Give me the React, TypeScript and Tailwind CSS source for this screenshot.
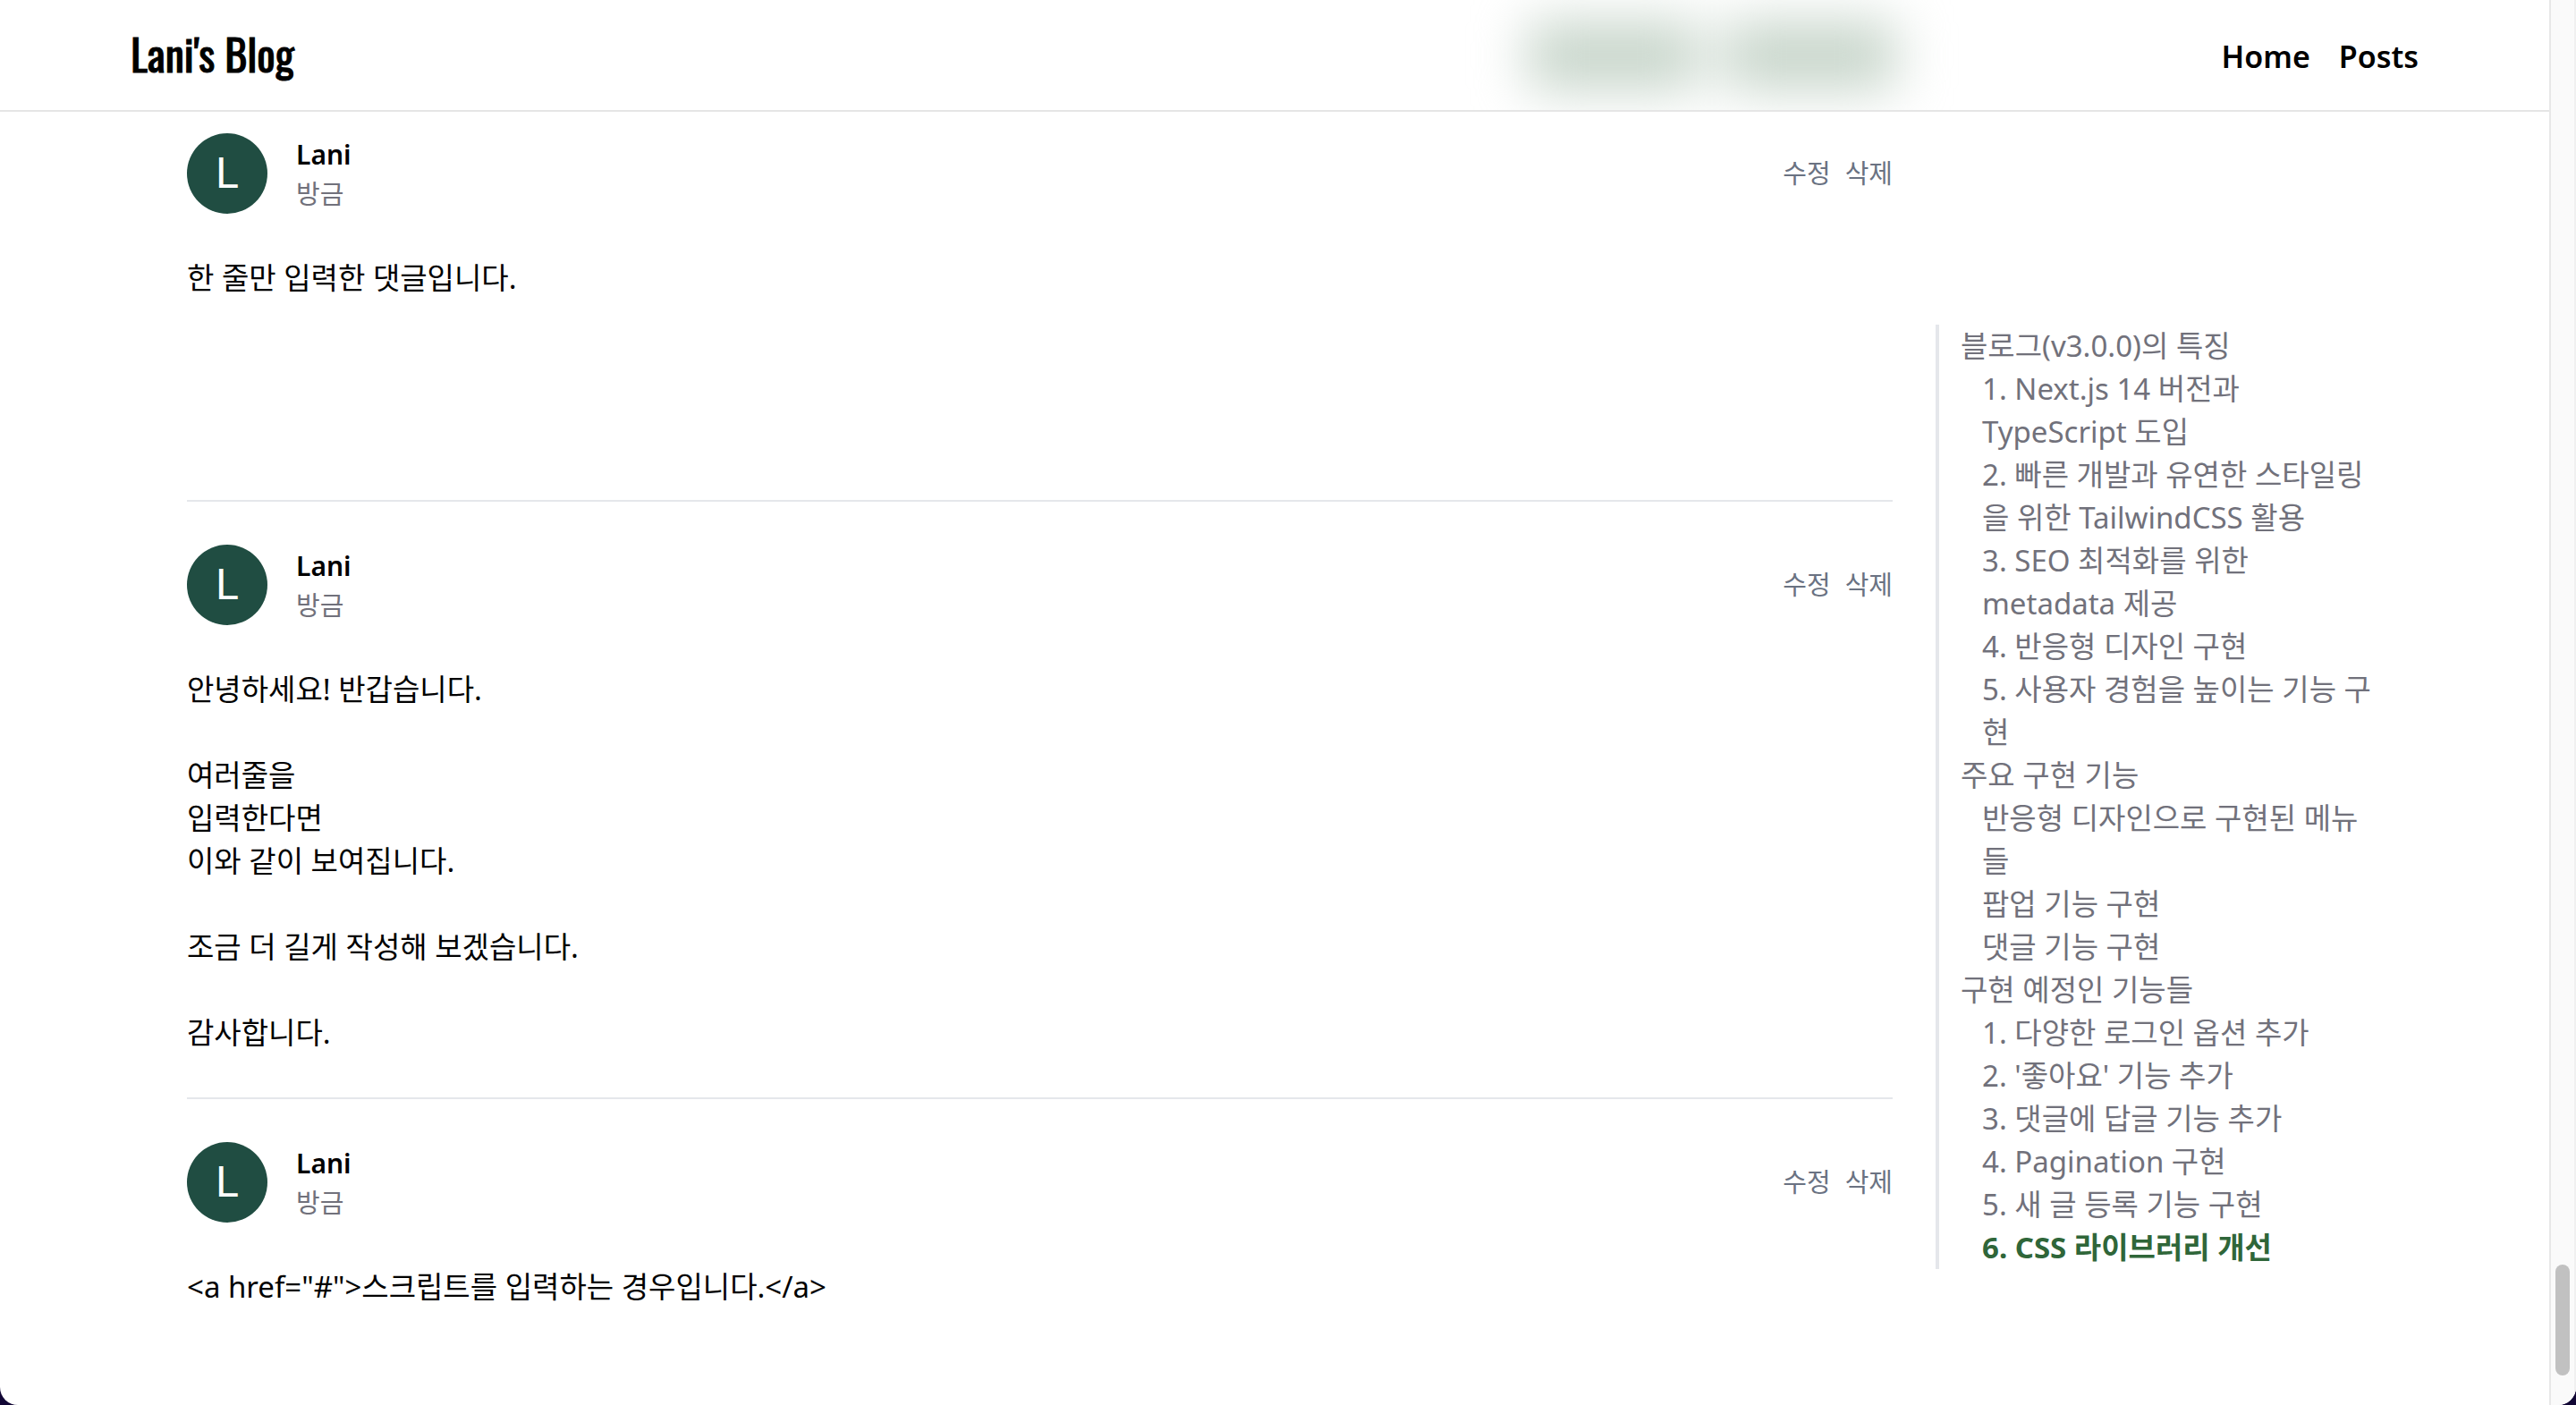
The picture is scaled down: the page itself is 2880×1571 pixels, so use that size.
type TocEntry = { text: string; nested?: boolean; active?: boolean };

const toc: TocEntry[] = [
  { text: "블로그(v3.0.0)의 특징" },
  { text: "1. Next.js 14 버전과 TypeScript 도입", nested: true },
  { text: "2. 빠른 개발과 유연한 스타일링을 위한 TailwindCSS 활용", nested: true },
  { text: "3. SEO 최적화를 위한 metadata 제공", nested: true },
  { text: "4. 반응형 디자인 구현", nested: true },
  { text: "5. 사용자 경험을 높이는 기능 구현", nested: true },
  { text: "주요 구현 기능" },
  { text: "반응형 디자인으로 구현된 메뉴들", nested: true },
  { text: "팝업 기능 구현", nested: true },
  { text: "댓글 기능 구현", nested: true },
  { text: "구현 예정인 기능들" },
  { text: "1. 다양한 로그인 옵션 추가", nested: true },
  { text: "2. '좋아요' 기능 추가", nested: true },
  { text: "3. 댓글에 답글 기능 추가", nested: true },
  { text: "4. Pagination 구현", nested: true },
  { text: "5. 새 글 등록 기능 구현", nested: true },
  { text: "6. CSS 라이브러리 개선", nested: true, active: true },
];

const comments = [
  "한 줄만 입력한 댓글입니다.",
  "안녕하세요! 반갑습니다.\n\n여러줄을\n입력한다면\n이와 같이 보여집니다.\n\n조금 더 길게 작성해 보겠습니다.\n\n감사합니다.",
  '<a href="#">스크립트를 입력하는 경우입니다.</a>',
];

function Header() {
  return (
    <header className="relative flex h-[125px] shrink-0 items-center justify-between overflow-hidden border-b-2 border-[#e5e5e5] px-[146px]">
      {/* Comment form buttons showing through the frosted header */}
      <div aria-hidden="true" className="absolute inset-y-0 right-[730px] flex items-center gap-7 blur-[29px]">
        <div className="h-[76px] w-[192px] rounded-lg bg-[#c7d5ca]" />
        <div className="h-[76px] w-[192px] rounded-lg bg-[#c7d5ca]" />
      </div>
      <a
        href="#"
        className="pb-1 text-[48px] leading-[60px] font-normal [-webkit-text-stroke:1px_black] font-['Oswald','Roboto_Condensed','Open_Sans_Condensed','Liberation_Sans_Narrow','Noto_Sans',sans-serif]"
      >
        Lani's Blog
      </a>
      <nav className="flex gap-8 pt-0.5 text-[34px] leading-[48px] font-semibold">
        <a href="#">Home</a>
        <a href="#">Posts</a>
      </nav>
    </header>
  );
}

function Comment({ body }: { body: string }) {
  return (
    <li className="border-b-2 border-gray-200 py-12 first:pt-6 last:border-b-0">
      <div className="flex items-center justify-between">
        <div className="flex items-start gap-8">
          <div className="flex size-[90px] items-center justify-center rounded-full bg-[#204d42] font-['Roboto',sans-serif] text-[48px] leading-none text-white">
            L
          </div>
          <div>
            <p className="text-[30px] leading-[48px] font-semibold">Lani</p>
            <p className="text-[29px] leading-[40px] text-zinc-500">방금</p>
          </div>
        </div>
        <div className="flex gap-4 text-[29px] leading-[40px] text-gray-500">
          <button type="button">수정</button>
          <button type="button">삭제</button>
        </div>
      </div>
      <p className="mt-12 min-h-56 text-[33px] leading-[48px] whitespace-pre-line">{body}</p>
    </li>
  );
}

function TableOfContents() {
  return (
    <aside className="mt-[238px] w-[500px] shrink-0 self-start border-l-4 border-gray-200 pl-6">
      <ul className="text-[33px] leading-[48px] text-zinc-500">
        {toc.map((entry) => (
          <li key={entry.text} className={entry.nested ? "pl-6" : ""}>
            <a href="#" className={entry.active ? "block font-bold text-[#2f6639]" : "block"}>
              {entry.text}
            </a>
          </li>
        ))}
      </ul>
    </aside>
  );
}

export default function App() {
  return (
    <div className="h-screen bg-[#120735] font-['Noto_Sans','Noto_Sans_CJK_KR',sans-serif] text-black">
      <div className="flex h-full overflow-hidden rounded-b-[20px] bg-white">
        <div className="flex min-w-0 flex-1 flex-col overflow-hidden">
          <Header />
          <main className="flex min-h-0 flex-1 gap-12 pr-[186px] pl-[209px]">
            <ul className="min-w-0 flex-1">
              {comments.map((body) => (
                <Comment key={body} body={body} />
              ))}
            </ul>
            <TableOfContents />
          </main>
        </div>
        <div aria-hidden="true" className="flex w-[30px] shrink-0 flex-col items-center justify-end border-r-2 border-l-2 border-r-[#f0f0f0] border-l-[#e8e8e8] bg-[#fafafa] pb-[33px]">
          <div className="h-[124px] w-4 rounded-full bg-[#c1c1c1]" />
        </div>
      </div>
    </div>
  );
}
